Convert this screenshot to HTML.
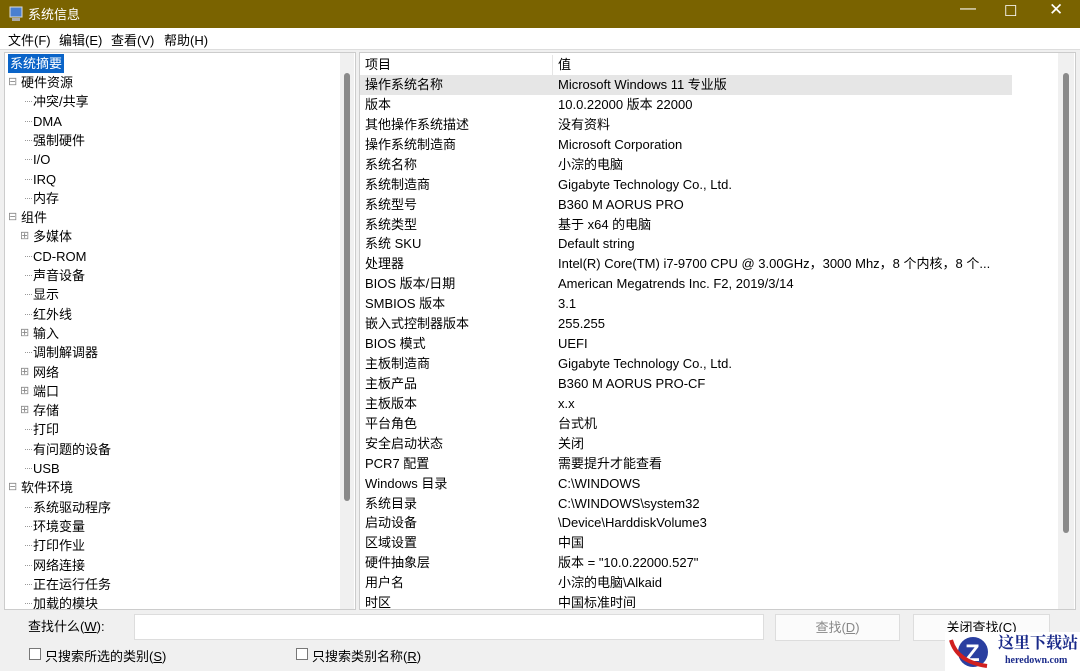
<!DOCTYPE html><html><head><meta charset="utf-8"><style>
*{margin:0;padding:0;box-sizing:border-box}
html,body{width:1080px;height:671px;overflow:hidden}
body{background:#f0f0f0;font:13px "Liberation Sans","Noto Sans CJK SC",sans-serif;color:#000;position:relative}
.tb{position:absolute;left:0;top:0;width:1080px;height:28px;background:#7a6300;color:#fff}
.tb span{position:absolute;top:4px;font-size:13px}
.menu{position:absolute;top:28px;left:0;width:1080px;height:22px;background:#fff;border-bottom:1px solid #ddd}
.menu span{position:absolute;top:2px}
.lp{position:absolute;left:4px;top:52px;width:352px;height:558px;background:#fff;border:1px solid #ccc;overflow:hidden}
.rp{position:absolute;left:359px;top:52px;width:717px;height:558px;background:#fff;border:1px solid #ccc;overflow:hidden}
.sb{position:absolute;top:0;width:14px;height:100%;background:#f0f0f0}
.th{position:absolute;width:6px;background:#8a8a8a;border-radius:3px}
.t{position:absolute;white-space:nowrap;line-height:19px}
.r{position:absolute;left:0;width:700px;height:20px;line-height:20px}
.r span{position:absolute;white-space:nowrap}
.btn{position:absolute;top:614px;height:27px;border:1px solid #ddd;background:#fbfbfb;text-align:center;line-height:26px}
.cb{position:absolute;top:648px;width:12px;height:12px;border:1px solid #777;background:#fff}
</style></head><body>
<div class="tb">
<svg style="position:absolute;left:8px;top:6px" width="16" height="16"><rect x="2" y="1" width="12" height="10" fill="#4a7fd0" stroke="#ddd"/><rect x="4" y="12" width="8" height="3" fill="#aaa"/></svg>
<span style="left:28px">系统信息</span>
<span style="left:960px;top:0px;font-size:16px">—</span>
<span style="left:1004px;top:2px;font-size:15px">☐</span>
<span style="left:1049px;top:0px;font-size:17px">✕</span>
</div>
<div class="menu"><span style="left:8px">文件(F)</span><span style="left:59px">编辑(E)</span><span style="left:111px">查看(V)</span><span style="left:164px">帮助(H)</span></div>
<div class="lp">
<div class="sb" style="right:1px"><div class="th" style="left:4px;top:20px;height:428px"></div></div>
<div class="t" style="left:3px;top:1px;background:#0a64c8;color:#fff;padding:0 2px">系统摘要</div>
<div id="tree"></div>
</div>
<div class="rp">
<div class="sb" style="right:1px;width:16px"><div class="th" style="left:5px;top:20px;height:460px"></div></div>
<div class="r" style="top:2px"><span style="left:5px">项目</span><span style="left:198px">值</span></div>
<div style="position:absolute;left:192px;top:2px;width:1px;height:20px;background:#e5e5e5"></div>
<div style="position:absolute;left:0;top:22px;width:652px;height:20px;background:#e6e6e6"></div>
<div id="rows"></div>
</div>
<span style="position:absolute;left:28px;top:616px">查找什么(<u>W</u>):</span>
<div style="position:absolute;left:134px;top:614px;width:630px;height:26px;background:#fff;border:1px solid #ddd"></div>
<div class="btn" style="left:775px;width:125px;color:#888">查找(<u>D</u>)</div>
<div class="btn" style="left:913px;width:137px">关闭查找(<u>C</u>)</div>
<div class="cb" style="left:29px"></div><span style="position:absolute;left:45px;top:646px">只搜索所选的类别(<u>S</u>)</span>
<div class="cb" style="left:296px"></div><span style="position:absolute;left:312px;top:646px">只搜索类别名称(<u>R</u>)</span>
<div style="position:absolute;left:945px;top:632px;width:135px;height:39px;background:#fff"><svg width="50" height="39" style="position:absolute;left:2px;top:0"><circle cx="26" cy="20" r="15" fill="#2a3fa0"/><text x="18" y="29" font-size="24" font-weight="bold" fill="#fff" font-family="Liberation Sans">Z</text><path d="M4 8 Q10 30 40 34" stroke="#d02020" stroke-width="4" fill="none"/></svg><span style="position:absolute;left:53px;top:0;white-space:nowrap;font:bold 16px 'Noto Serif CJK SC',serif;line-height:20px;color:#1a2a8a">这里下载站</span><span style="position:absolute;left:60px;top:23px;white-space:nowrap;font:bold 10px 'Liberation Serif',serif;color:#1a2a8a">heredown.com</span></div>
<script>
var tr=[[0,"⊟","硬件资源"],[1,"","冲突/共享"],[1,"","DMA"],[1,"","强制硬件"],[1,"","I/O"],[1,"","IRQ"],[1,"","内存"],[0,"⊟","组件"],[1,"⊞","多媒体"],[1,"","CD-ROM"],[1,"","声音设备"],[1,"","显示"],[1,"","红外线"],[1,"⊞","输入"],[1,"","调制解调器"],[1,"⊞","网络"],[1,"⊞","端口"],[1,"⊞","存储"],[1,"","打印"],[1,"","有问题的设备"],[1,"","USB"],[0,"⊟","软件环境"],[1,"","系统驱动程序"],[1,"","环境变量"],[1,"","打印作业"],[1,"","网络连接"],[1,"","正在运行任务"],[1,"","加载的模块"]];
var h="";tr.forEach(function(e,i){var y=20+i*19.3;var x=e[0]?28:16;h+='<div class="t" style="left:'+x+'px;top:'+y+'px">'+e[2]+'</div>';if(e[1])h+='<div class="t" style="left:'+(x-13)+'px;top:'+y+'px;color:#888;font-size:11px">'+e[1]+'</div>';else if(e[0])h+='<div style="position:absolute;left:20px;top:'+(y+9)+'px;width:7px;border-top:1px dotted #999"></div>';});
document.getElementById("tree").innerHTML=h;
var rw=[["操作系统名称","Microsoft Windows 11 专业版"],["版本","10.0.22000 版本 22000"],["其他操作系统描述","没有资料"],["操作系统制造商","Microsoft Corporation"],["系统名称","小淙的电脑"],["系统制造商","Gigabyte Technology Co., Ltd."],["系统型号","B360 M AORUS PRO"],["系统类型","基于 x64 的电脑"],["系统 SKU","Default string"],["处理器","Intel(R) Core(TM) i7-9700 CPU @ 3.00GHz，3000 Mhz，8 个内核，8 个..."],["BIOS 版本/日期","American Megatrends Inc. F2, 2019/3/14"],["SMBIOS 版本","3.1"],["嵌入式控制器版本","255.255"],["BIOS 模式","UEFI"],["主板制造商","Gigabyte Technology Co., Ltd."],["主板产品","B360 M AORUS PRO-CF"],["主板版本","x.x"],["平台角色","台式机"],["安全启动状态","关闭"],["PCR7 配置","需要提升才能查看"],["Windows 目录","C:\\WINDOWS"],["系统目录","C:\\WINDOWS\\system32"],["启动设备","\\Device\\HarddiskVolume3"],["区域设置","中国"],["硬件抽象层","版本 = \"10.0.22000.527\""],["用户名","小淙的电脑\\Alkaid"],["时区","中国标准时间"]];
h="";rw.forEach(function(e,i){h+='<div class="r" style="top:'+(22+i*19.93)+'px"><span style="left:5px">'+e[0]+'</span><span style="left:198px">'+e[1]+'</span></div>'});
document.getElementById("rows").innerHTML=h;
</script>
</body></html>
